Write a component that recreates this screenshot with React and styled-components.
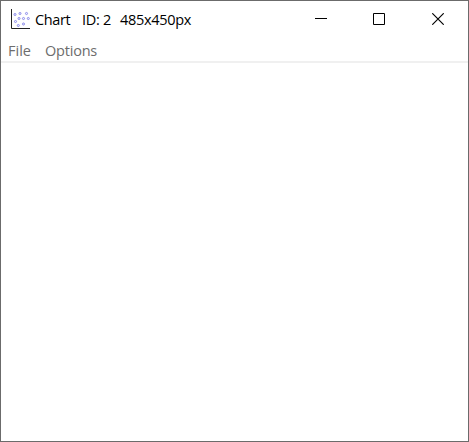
import React from "react";
import styled, { createGlobalStyle } from "styled-components";

const GlobalStyle = createGlobalStyle`
  body { margin: 0; background: #fff; }
  * { box-sizing: border-box; }
`;

const Window = styled.main`
  display: flex;
  flex-direction: column;
  width: 469px;
  height: 442px;
  overflow: hidden;
  border: 1px solid #6b6b6b;
  background: #fff;
  font-family: "Open Sans", "Noto Sans", sans-serif;
`;

const TitleBar = styled.header`
  display: flex;
  height: 37px;
  padding-left: 10px;
`;

const ChartIcon = styled.svg`
  flex: none;
  width: 20px;
  height: 21px;
  margin-top: 8px;
`;

const Title = styled.h1`
  display: flex;
  flex: 1;
  margin: 0 0 0 4px;
  font-size: 14.5px;
  font-weight: 400;
  line-height: 37px;
  white-space: pre;
  color: #000;
`;

const TitlePart = styled.span`
  flex: none;
  width: ${(p) => p.$width}px;
  letter-spacing: ${(p) => p.$tracking}px;
`;

const Controls = styled.div`
  display: flex;
`;

const ControlButton = styled.button`
  display: grid;
  place-items: center;
  width: ${(p) => p.$width}px;
  height: 36px;
  padding: 0;
  border: 0;
  background: transparent;
`;

const ControlIcon = styled.svg`
  display: block;
  width: 12px;
  height: 12px;
`;

const MenuBar = styled.nav`
  display: flex;
  gap: 14px;
  height: 25px;
  padding-left: 7px;
  border-bottom: 2px solid #f0f0f0;
`;

const MenuItem = styled.button`
  padding: 1px 0 0;
  border: 0;
  background: transparent;
  font: 400 14.5px/24px "Open Sans", "Noto Sans", sans-serif;
  letter-spacing: ${(p) => p.$tracking}px;
  color: #6d6d6d;
`;

const ChartArea = styled.section`
  flex: 1;
`;

const points = [
  [4, 5.5], [9, 4.5], [15.5, 4.5], [8, 9.5], [12.5, 9.5],
  [17.3, 9.5], [4.5, 12.5], [12.5, 15], [7.3, 16.5],
];

export default function App() {
  return (
    <>
      <GlobalStyle />
      <Window>
        <TitleBar>
          <ChartIcon viewBox="0 0 20 21">
            <path d="M0.5 0V19.5H19" fill="none" stroke="#222" />
            {points.map(([x, y]) => (
              <circle key={`${x}-${y}`} cx={x} cy={y} r="1.05" fill="#eef" stroke="#8585e8" strokeWidth=".9" />
            ))}
          </ChartIcon>
          <Title>
            <TitlePart $width={47} $tracking={-0.4}>{"Chart   "}</TitlePart>
            <TitlePart $width={38} $tracking={-0.3}>{"ID: 2  "}</TitlePart>
            <TitlePart $width={74} $tracking={-0.3}>485x450px</TitlePart>
          </Title>
          <Controls>
            <ControlButton $width={58} aria-label="Minimize">
              <ControlIcon viewBox="0 0 12 12"><path d="M0 5.5H12" stroke="#000" /></ControlIcon>
            </ControlButton>
            <ControlButton $width={58} aria-label="Maximize">
              <ControlIcon viewBox="0 0 12 12"><path d="M.5.5H11.5V11.5H.5Z" fill="none" stroke="#000" /></ControlIcon>
            </ControlButton>
            <ControlButton $width={60} aria-label="Close">
              <ControlIcon viewBox="0 0 12 12"><path d="M.3.3 11.7 11.7M11.7.3.3 11.7" stroke="#000" strokeWidth="1.15" /></ControlIcon>
            </ControlButton>
          </Controls>
        </TitleBar>
        <MenuBar>
          <MenuItem $tracking={0}>File</MenuItem>
          <MenuItem $tracking={-0.2}>Options</MenuItem>
        </MenuBar>
        <ChartArea />
      </Window>
    </>
  );
}
